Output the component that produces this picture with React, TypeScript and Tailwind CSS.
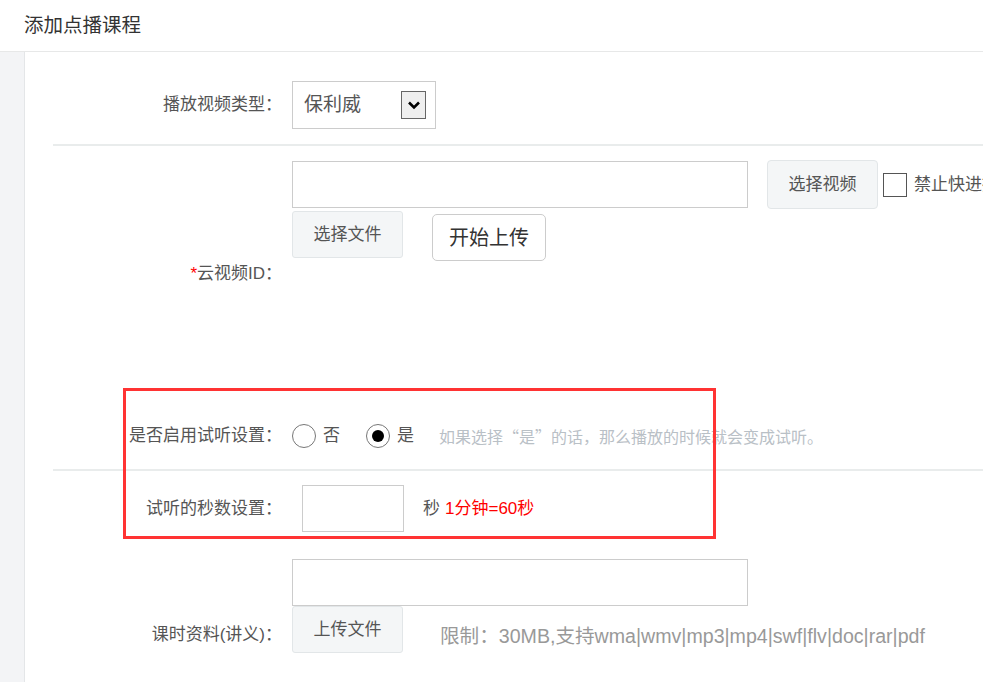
import React from "react";

const font = { fontFamily: '"Liberation Sans","Noto Sans CJK SC",sans-serif' };
const cjk = { fontFamily: '"Noto Sans CJK SC","Liberation Sans",sans-serif' };

function Chevron() {
  return (
    <svg width="14" height="10" viewBox="0 0 14 10">
      <path d="M2 2.5 L7 7.5 L12 2.5" fill="none" stroke="#000" strokeWidth="2.6" />
    </svg>
  );
}

function Radio({ checked }: { checked?: boolean }) {
  return (
    <span className="w-[24px] h-[24px] rounded-full border border-[#777] bg-white flex items-center justify-center">
      {checked && <span className="w-[12px] h-[12px] rounded-full bg-black" />}
    </span>
  );
}

export default function App() {
  return (
    <div className="relative w-[983px] h-[682px] overflow-hidden bg-white text-[#555]" style={font}>
      <div className="h-[52px] border-b border-[#e7e8e8] flex items-center pl-[24px]">
        <span className="text-[19.5px] text-[#333]">添加点播课程</span>
      </div>
      <div className="flex h-[630px]">
        <div className="w-[25px] shrink-0 bg-[#f3f4f6] border-r border-[#e4e6e8]" />
        <div className="flex-1 ml-[28px] flex flex-col">
          {/* row 1 */}
          <div className="shrink-0 flex items-center pt-[29px] pb-[15px] border-b-2 border-[#e9ecec]">
            <div className="w-[229px] text-right text-[17px]">播放视频类型：</div>
            <div className="ml-[10px] w-[144px] h-[48px] border border-[#ccc] flex items-center justify-between pl-[11px] pr-[9px]">
              <span className="text-[19px] text-[#555]">保利威</span>
              <span className="w-[25px] h-[28px] bg-[#efefef] border border-[#666] flex items-center justify-center">
                <Chevron />
              </span>
            </div>
          </div>
          {/* row 2 */}
          <div className="shrink-0 flex items-center h-[256px]">
            <div className="w-[229px] text-right text-[17px]">
              <span className="text-[#f00]">*</span>云视频ID：
            </div>
            <div className="ml-[10px] self-start pt-[14px] flex flex-col">
              <div className="flex items-center">
                <div className="w-[456px] h-[47px] border border-[#ccc] bg-white" />
                <button className="ml-[19px] w-[111px] h-[49px] bg-[#f4f6f7] border border-[#e2e6e8] rounded-[4px] text-[17px] text-[#555]">选择视频</button>
                <span className="ml-[5px] w-[24px] h-[24px] border border-[#555] bg-white" />
                <span className="ml-[7px] text-[17px] whitespace-nowrap">禁止快进拖</span>
              </div>
              <div className="flex items-start mt-[2px]">
                <button className="w-[111px] h-[47px] bg-[#f4f6f7] border border-[#e2e6e8] rounded-[3px] text-[17px] text-[#555]">选择文件</button>
                <button className="ml-[29px] mt-[3px] w-[114px] h-[47px] bg-white border border-[#ccc] rounded-[5px] text-[20px] text-[#333]">开始上传</button>
              </div>
            </div>
          </div>
          {/* row 3 */}
          <div className="shrink-0 flex items-center h-[69px] border-b-2 border-[#e9ecec]">
            <div className="w-[229px] text-right text-[17px] whitespace-nowrap">是否启用试听设置：</div>
            <div className="ml-[10px] flex items-center text-[17px]">
              <Radio />
              <span className="ml-[7px]">否</span>
              <span className="ml-[26px]"><Radio checked /></span>
              <span className="ml-[7px]">是</span>
              <span className="ml-[25px] text-[16px] text-[#b9c0c6]" style={cjk}>如果选择“是”的话，那么播放的时候就会变成试听。</span>
            </div>
          </div>
          {/* row 4 */}
          <div className="shrink-0 flex items-center h-[75px]">
            <div className="w-[229px] text-right text-[17px]">试听的秒数设置：</div>
            <div className="ml-[20px] flex items-center text-[17px]">
              <div className="w-[102px] h-[47px] border border-[#ccc] bg-white" />
              <span className="ml-[19px]">秒</span>
              <span className="ml-[5px] text-[#f00]">1分钟=60秒</span>
            </div>
          </div>
          {/* row 5 */}
          <div className="shrink-0 flex items-center h-[178px]">
            <div className="w-[229px] text-right text-[17px]">课时资料(讲义)：</div>
            <div className="ml-[10px] self-start pt-[13px] flex flex-col">
              <div className="w-[456px] h-[47px] border border-[#ccc] bg-white" />
              <div className="flex items-center">
                <button className="w-[111px] h-[47px] bg-[#f4f6f7] border border-[#e2e6e8] rounded-[3px] text-[17px] text-[#555]">上传文件</button>
                <span className="ml-[37px] mt-[12px] text-[19.6px] text-[#999] whitespace-nowrap">
                  <span style={cjk}>限制：</span>30MB,支持wma|wmv|mp3|mp4|swf|flv|doc|rar|pdf
                </span>
              </div>
            </div>
          </div>
        </div>
      </div>
      <div className="absolute left-[123px] top-[388px] w-[593px] h-[151px] border-[3px] border-[#f33]" />
    </div>
  );
}
